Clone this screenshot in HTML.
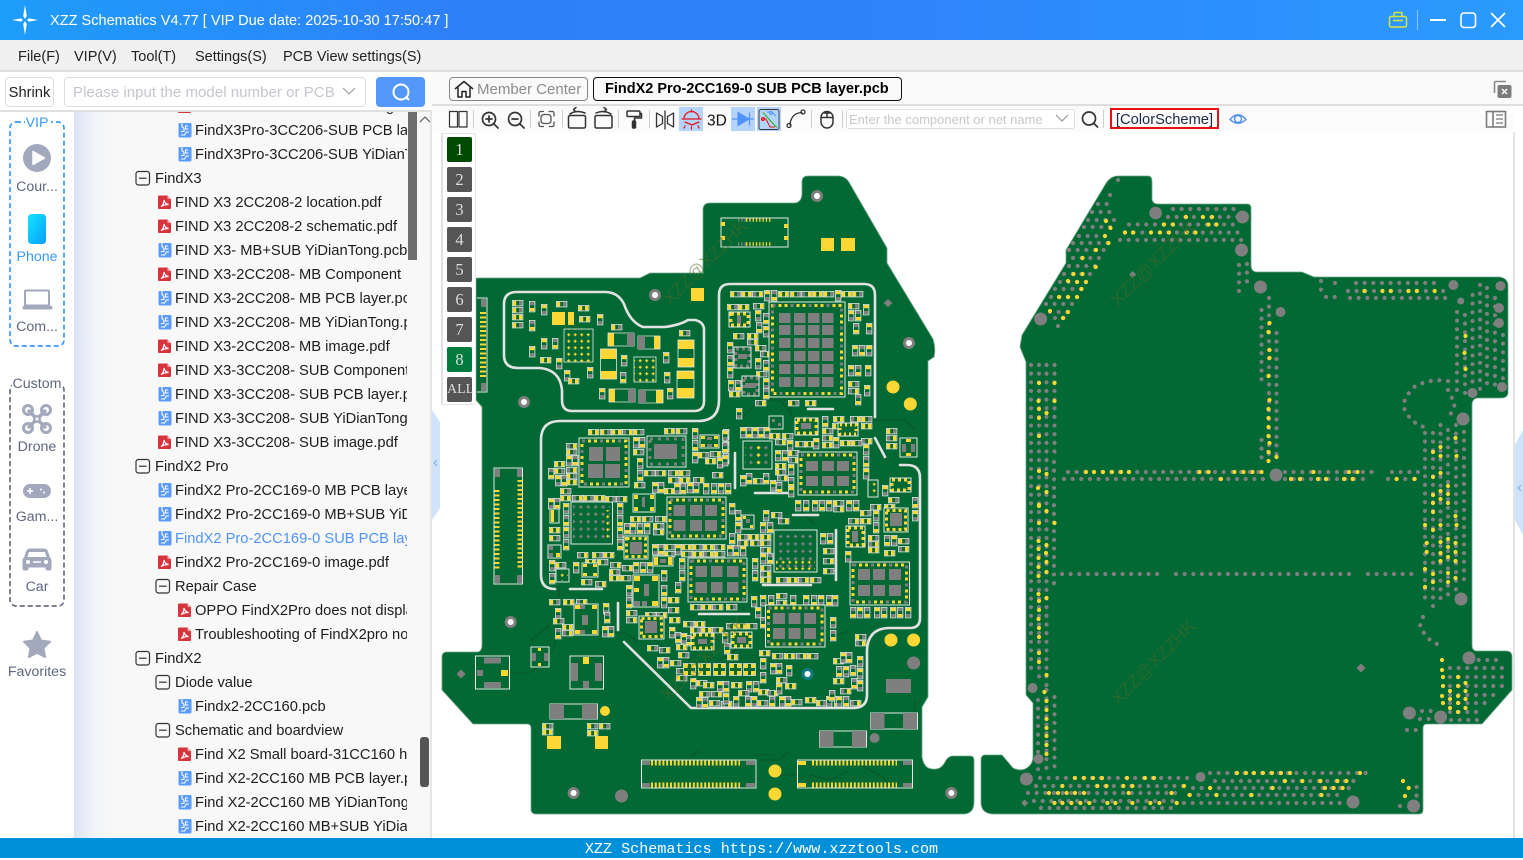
<!DOCTYPE html>
<html><head><meta charset="utf-8"><title>XZZ Schematics</title>
<style>
*{box-sizing:border-box}
html,body{margin:0;padding:0;width:1523px;height:858px;overflow:hidden;background:#fff;font-family:"Liberation Sans","Noto Sans CJK SC",sans-serif;color:#222}
.a{position:absolute}
#title{left:0;top:0;width:1523px;height:40px;background:linear-gradient(90deg,#1e9dfb 0,#2e80f8 30%,#2e82f9 55%,#2b9bff 100%)}
#ttext{left:50px;top:12px;font-size:14.55px;color:#fff;white-space:nowrap;line-height:18px}
#menu{left:0;top:40px;width:1523px;height:32px;background:#f0f0f0;border-bottom:2px solid #dedede}
#menu span{position:absolute;top:8px;font-size:14.5px;line-height:18px;white-space:nowrap}
#lefthead{left:0;top:72px;width:432px;height:40px;background:#fff;border-bottom:2px solid #e0e0e0}
#shrink{left:5px;top:5px;width:49px;height:30px;border:1px solid #ddd;border-radius:4px;font-size:14.7px;line-height:30px;text-align:center}
#inp{left:64px;top:5px;width:302px;height:30px;border:1px solid #ddd;border-radius:4px;font-size:15.1px;line-height:30px;color:#c4c6cc;padding-left:8px;white-space:nowrap}
#sb{left:376px;top:5px;width:49px;height:30px;background:#5598fb;border-radius:4px}
#side{left:0;top:112px;width:74px;height:726px;background:#fff}
.sl{position:absolute;left:0;width:74px;text-align:center;font-size:14.2px;color:#5f6780;line-height:20px;white-space:nowrap}
#panel{left:74px;top:112px;width:356px;height:726px;background:linear-gradient(90deg,#dbe4f4 0,#f3f5f9 22px,#f8f8f8 40px)}
#tree{left:0;top:0;width:333px;height:726px;overflow:hidden}
#rows{position:absolute;left:0;top:-17px;width:333px}
.r{height:24px;line-height:24px;font-size:14.7px;white-space:nowrap;position:relative;color:#1d1d1d}
.r svg{position:absolute;top:3px;left:0;width:16px;height:16px}
.r b{font-weight:normal;position:absolute;left:18px;top:0}
.d1{margin-left:61px}.d1 b{left:20px}
.d2{margin-left:83px}
.d3{margin-left:103px}
.fo{margin-left:81px}.fo b{left:20px}
#sc1{left:334px;top:0;width:9px;height:148px;background:#6e6e6e}
#sc2{left:346px;top:625px;width:9px;height:50px;background:#555;border-radius:3px}
#tabs{left:432px;top:72px;width:1091px;height:34px;background:#fafafa;border-bottom:2px solid #dedede}
#mc{left:17px;top:5px;width:139px;height:24px;border:1px solid #888;border-radius:4px;font-size:15px;color:#8c8c8c;line-height:23px;padding-left:27px;white-space:nowrap}
#tab{left:161px;top:5px;width:309px;height:24px;border:1px solid #111;border-radius:4px;font-size:14.5px;font-weight:bold;color:#000;line-height:23px;padding-left:11px;white-space:nowrap}
#tool{left:432px;top:106px;width:1081px;height:26px;background:#fbfbfb}
#ti{left:846px;top:109px;width:229px;height:20px;border:1px solid #ddd;border-radius:3px;background:#fff;font-size:13px;color:#c8c8c8;line-height:19px;padding-left:2px;white-space:nowrap;overflow:hidden}
#cs{left:1110px;top:108px;width:109px;height:21px;border:2px solid #e81010;font-size:14.7px;line-height:20px;text-align:center;color:#1c2b4a;white-space:nowrap}
#lp{left:441px;top:133px;width:35px;height:272px;background:#fff;border:1px solid #e4e4e4;border-left:2px solid #e0e0e0;border-radius:0 0 3px 0}
.lb{position:absolute;left:4px;width:25px;height:25px;background:#555;color:#ddd;font-family:"Liberation Serif",serif;font-size:16.5px;line-height:26px;text-align:center;border-radius:2px}
#foot{left:0;top:838px;width:1523px;height:20px;background:#0090d9;color:#fff;font-family:"Liberation Mono",monospace;font-size:15.1px;line-height:22px;text-align:center;white-space:nowrap}
.ic{fill:#026934;stroke:#e6e6e6;stroke-width:1}
.pd{fill:none;stroke:#fdd835;stroke-width:3;stroke-dasharray:3 3}
.pg{fill:none;stroke:#7f7f7f;stroke-width:3;stroke-dasharray:3 15}
.gs{fill:#7f7f7f}
.w{fill:none;stroke:#e2e2e2;stroke-width:2.6;stroke-linecap:round;stroke-linejoin:round}
.tr{fill:none;stroke:#0d4f24;stroke-width:.8}
.via{fill:none;stroke:#7f7f7f;stroke-width:4.2;stroke-linecap:round;stroke-dasharray:0 8.65}
.wm{font-family:"Liberation Sans",sans-serif;font-size:18px;fill:#4c6a26;opacity:.5}
.t{fill:none;stroke:#333;stroke-width:1.6;stroke-linecap:round;stroke-linejoin:round}
</style></head>
<body>
<svg class="a" style="left:0;top:0" width="1523" height="858" viewBox="0 0 1523 858" xmlns="http://www.w3.org/2000/svg">
<defs>
<g id="h"><rect x=".4" y=".4" width="10.5" height="5.5" fill="#026934" stroke="#e6e6e6" stroke-width=".8"/><rect x="1" y="1" width="3.2" height="4.4" fill="#fdd835"/><rect x="7" y="1" width="3.2" height="4.4" fill="#7f7f7f"/></g>
<g id="a"><rect x=".4" y=".4" width="10.5" height="5.5" fill="#026934" stroke="#e6e6e6" stroke-width=".8"/><rect x="1" y="1" width="3.2" height="4.4" fill="#7f7f7f"/><rect x="7" y="1" width="3.2" height="4.4" fill="#fdd835"/></g>
<g id="k"><rect x=".4" y=".4" width="10.5" height="5.500" fill="#026934" stroke="#e6e6e6" stroke-width=".8"/><rect x="1" y="1" width="3.2" height="4.4" fill="#fdd835"/><rect x="7" y="1" width="3.2" height="4.4" fill="#fdd835"/></g>
<g id="v"><rect x=".4" y=".4" width="5.5" height="10.5" fill="#026934" stroke="#e6e6e6" stroke-width=".8"/><rect x="1" y="1" width="4.4" height="3.2" fill="#fdd835"/><rect x="1" y="7" width="4.4" height="3.2" fill="#7f7f7f"/></g>
<g id="u"><rect x=".4" y=".4" width="5.5" height="10.5" fill="#026934" stroke="#e6e6e6" stroke-width=".8"/><rect x="1" y="1" width="4.4" height="3.2" fill="#7f7f7f"/><rect x="1" y="7" width="4.4" height="3.2" fill="#fdd835"/></g>
<g id="q"><rect x=".5" y=".5" width="12" height="12" fill="#026934" stroke="#e6e6e6" stroke-width=".8"/><path fill="#fdd835" d="M1 1h4v4h-4zM8 1h4v4h-4zM1 8h4v4h-4zM8 8h4v4h-4z"/></g>
<pattern id="bg" width="7.4" height="7.4" patternUnits="userSpaceOnUse"><path d="M3.7 2v3.4M2 3.7h3.4" stroke="#7f7f7f" stroke-width="1.4"/></pattern>
<pattern id="by" width="14.8" height="7.4" patternUnits="userSpaceOnUse"><path d="M3.7 2v3.4M2 3.7h3.4" stroke="#fdd835" stroke-width="1.4"/></pattern>
<pattern id="bc" width="6.5" height="6.5" patternUnits="userSpaceOnUse"><path d="M3.2 1.7v3M1.7 3.2h3" stroke="#fdd835" stroke-width="1.2"/></pattern>
<symbol id="pdf" viewBox="0 0 16 16"><path d="M2 1.500h8.500l3.500 3.500v9a1 1 0 0 1-1 1H2a1 1 0 0 1-1-1V2.500a1 1 0 0 1 1-1z" fill="#d8343c"/><path d="M10.500 1.500v3.500h3.500z" fill="#f1a4a8"/><path d="M4 12.500c2-1 3-4 3-6.500 .5 2.500 2 4 4.500 4.500-2.500 0-5 .5-7.500 2z" fill="none" stroke="#fff" stroke-width="1.200"/></symbol>
<symbol id="pcb" viewBox="0 0 16 16"><rect x="1.500" y="1" width="13" height="14.500" rx="1.500" fill="#5a9bfb"/><path d="M5 1v3.500l2 2v3l-3 0M11 4h-2.500v3l3 0M4 13h3.500l2-3h2.500" fill="none" stroke="#fff" stroke-width="1.100"/></symbol>
<symbol id="fld" viewBox="0 0 16 16"><rect x="1" y="1.500" width="13.500" height="13.500" rx="2.500" fill="none" stroke="#333" stroke-width="1.200"/><path d="M4 8.200h7.500" stroke="#333" stroke-width="1.200"/></symbol>
<linearGradient id="ph" x1="0" y1="0" x2="1" y2="1"><stop offset="0" stop-color="#12e6ff"/><stop offset="1" stop-color="#0a9cff"/></linearGradient>
</defs>

<!-- left board -->
<path d="M476 278H640L650 273H703V210Q703 203 710 203H795Q802 202 802 193V182Q802 176 808 176H838Q846 176 850 184L887 248V263L933 339Q936 349 934 357L928 361V697L922 707V757Q924 769 933 769Q941 770 945 762Q948 756 953 756H970Q974 756 974 760V802Q974 814 963 814H536Q531 814 531 809V728Q531 724 527 724H473L442 690V657Q442 652 447 652H478Q482 651 482 645V407L476 400Z" fill="#026934" stroke="#6fa68a" stroke-width=".8"/>
<!-- right board -->
<path d="M1118 176H1148Q1152 176 1152 182V198Q1152 204 1158 204H1247Q1251 204 1251 208V265Q1251 272 1257 272H1302L1314 277H1499Q1508 278 1508 286V392Q1508 398 1501 398H1477Q1472 399 1472 405V645Q1472 651 1477 651H1506Q1512 651 1512 657V690L1482 724H1427Q1423 724 1423 728V810Q1423 814 1419 814H994Q981 814 981 802V760Q981 755 985 755H1002L1013 768Q1019 771 1025 769Q1033 765 1033 757V703L1026 695V362L1020 347L1022 335L1066 263V250L1105 185Q1110 176 1118 176Z" fill="#026934" stroke="#6fa68a" stroke-width=".8"/>

<!-- right board vias -->
<path class="via" d="M1173 209H1235M1168 217H1240M1129 224.500H1236M1125 232.500H1245M1120 240H1245M1239 265V291M1247 264V288M1118 180H1119M1110 195H1111M1098 204H1111M1092 212H1111M1088 220H1116M1084 227H1113M1079 236H1111M1073 243H1109M1069 250H1106M1073 258H1101M1069 266H1096M1064 274H1091M1060 282H1087M1055 289H1082M1051 297H1078M1046 304H1073M1050 312H1069M1055 318H1066M1058 326H1059M1031 365V675M1039 365V680M1046.500 365V690M1054.500 365V453M1054 462V584M1054.500 697V767M1038 700V770M1046.500 690V770M1261.500 310V382M1261.500 440V460M1269 298V462M1276.500 333V462M1068 472H1261M1285 472H1376M1392 472H1418M1064 479H1266M1285 479H1371M1388 479H1415M1062 574H1158M1176 574H1351M1368 574H1413M1356 283H1439M1348 291H1445M1350 298H1448M1321 281V290M1326 297H1335M1335 283H1336M1457 312V392M1465 315V395M1472.500 295V392M1480 285V395M1487 288V390M1495 298V392M1503 335V380M1425 433V605M1433 433V607M1440.500 425V600M1448 430V595M1456 425V590M1464 432V585M1448 381Q1430 378 1414 387Q1400 402 1405 410Q1412 425 1428 428M1448 390L1455 404L1448 420M1423 617L1420 626L1424 633L1430 640L1437 644M1470 660H1504M1450 668H1505M1450 677H1505M1450 686H1505M1450 695H1498M1450 703H1490M1450 712H1482M1451 720H1480M1422 711H1431M1420 719H1430M1407 730H1417M1040 778H1190M1210 773H1370M1036 786H1190M1215 781H1358M1193 788H1352M1028 793H1181M1190 795H1338M1034 801H1177M1184 803H1344M1041 808H1172M1416.500 787V796M1400 806H1401"/>
<path fill="none" stroke="#fdd835" stroke-width="4.200" stroke-linecap="round" d="M1186 217h.01M1203 217h.01M1212 217h.01M1164 224.500h.01M1173 224.500h.01M1208.500 224.500h.01M1216.500 224.500h.01M1125 232.500h.01M1133 232.500h.01M1151 232.500h.01M1160 232.500h.01M1169 232.500h.01M1187 232.500h.01M1195.500 232.500h.01M1106 221h.01M1110.500 228h.01M1105 236h.01M1108.500 243h.01M1096 250h.01M1082.500 258h.01M1095.700 267h.01M1073.500 274h.01M1082.500 274h.01M1068 281h.01M1077 282h.01M1086 282h.01M1081.500 289h.01M1059 297h.01M1068 297h.01M1077 297h.01M1050 311h.01M1068 312h.01M1063 318h.01M1039 383h.01M1054.500 383h.01M1038.500 401h.01M1054.500 401h.01M1039 409h.01M1046.500 413h.01M1039 418h.01M1039 436h.01M1039 471h.01M1046.500 474h.01M1038 488h.01M1046.500 492h.01M1039 505h.01M1269.500 323h.01M1268.500 332h.01M1269.500 350h.01M1269.500 358h.01M1268.500 376h.01M1269.500 400h.01M1268.500 409h.01M1268.500 418h.01M1268.500 427h.01M1268.500 436h.01M1269.500 443h.01M1268.500 452h.01M1276.500 457h.01M1268.500 461h.01M1086 472h.01M1094 472h.01M1103 472h.01M1112 472h.01M1121 472h.01M1129 472h.01M1199.500 472h.01M1208.600 472h.01M1234.500 472h.01M1243.500 472h.01M1252.500 472h.01M1261.500 472h.01M1313.500 472h.01M1349 472h.01M1357.500 472h.01M1221 479h.01M1291 479h.01M1300 479h.01M1318 479h.01M1326 479h.01M1344 479h.01M1352.600 479h.01M1396.600 479h.01M1414.600 479h.01M1364.400 291h.01M1382.400 291h.01M1390.700 291h.01M1408.400 291h.01M1416.800 291h.01M1434.700 291h.01M1465.500 336h.01M1464.500 353h.01M1465.500 369h.01M1455.500 438h.01M1440.500 447h.01M1433 452h.01M1440.500 456h.01M1456.500 456h.01M1440.500 473h.01M1433 477h.01M1448 486h.01M1440.500 491h.01M1433 495h.01M1448 494h.01M1440.500 499h.01M1433 503h.01M1448 503h.01M1433 512h.01M1455.500 516h.01M1425 525h.01M1440.500 525h.01M1456.500 525h.01M1433 530h.01M1448 539h.01M1426.700 543h.01M1440.500 542h.01M1455.500 543h.01M1448 547h.01M1426.700 552h.01M1440.500 553h.01M1455.500 552h.01M1448 557h.01M1440.500 561h.01M1455.500 561h.01M1425 569h.01M1448 573h.01M1433 574h.01M1455.500 578h.01M1433 582h.01M1448 582h.01M1425 587h.01M1039 506h.01M1046.500 511h.01M1039 523h.01M1054.500 523h.01M1038.500 541h.01M1046.500 545h.01M1038.500 549h.01M1046 553h.01M1038.500 558h.01M1046.500 562h.01M1038.500 567h.01M1046.500 572h.01M1038.500 576h.01M1038.500 594h.01M1039 601h.01M1046.500 598h.01M1039 610h.01M1038.500 619h.01M1039 628h.01M1039 637h.01M1039 653h.01M1039 662h.01M1046.500 675h.01M1044.400 692h.01M1046.500 701h.01M1046.500 710h.01M1046.500 719h.01M1046.500 728h.01M1046.500 736h.01M1046.500 745h.01M1046.500 754h.01M1442 660h.01M1442 670h.01M1443 677h.01M1458 677h.01M1465.500 683h.01M1443 686h.01M1458 686h.01M1450 691h.01M1465.500 691h.01M1442 696h.01M1458 696h.01M1450 699h.01M1465.500 699h.01M1443 703h.01M1458 703h.01M1450 708h.01M1465.500 708h.01M1458 712h.01M1075 778h.01M1084 778h.01M1093 778h.01M1102 778h.01M1127 778h.01M1145 778h.01M1154 778h.01M1237 773h.01M1246 773h.01M1254 773h.01M1263 773h.01M1272 773h.01M1281 773h.01M1290 773h.01M1360 773h.01M1062.400 786h.01M1097.400 786h.01M1106.400 786h.01M1123.400 786h.01M1132.400 786h.01M1184 786h.01M1285 781h.01M1302.400 781h.01M1320.400 781h.01M1337.400 781h.01M1346.400 781h.01M1210 788h.01M1272.600 788h.01M1325 788h.01M1333.600 788h.01M1342.600 788h.01M1049 793h.01M1058 793h.01M1066.600 793h.01M1075 793h.01M1084 793h.01M1128.600 793h.01M1171.500 793h.01M1189.500 795h.01M1216.500 795h.01M1251.500 795h.01M1321.500 795h.01M1054.500 803h.01M1062.400 803h.01M1071.400 803h.01M1080.400 803h.01M1089.400 803h.01M1107.400 803h.01M1115.400 803h.01M1132.400 803h.01M1150.400 803h.01M1159.400 803h.01M1176.700 803h.01M1403 781h.01M1408.700 788h.01M1405 796h.01"/>
<g fill="#7f7f7f"><circle cx="1155.600" cy="213" r="6.300"/><circle cx="1242.500" cy="217" r="6.500"/><circle cx="1241.500" cy="250" r="6.500"/><circle cx="1260.500" cy="287" r="6.500"/><circle cx="1280.500" cy="312" r="5"/><circle cx="1040.600" cy="319" r="6.500"/><circle cx="1453.400" cy="285" r="5"/><circle cx="1500.500" cy="286" r="5"/><circle cx="1460.700" cy="301" r="3.500"/><circle cx="1499" cy="308" r="5"/><circle cx="1499" cy="323" r="5"/><circle cx="1502" cy="387" r="5"/><circle cx="1472.500" cy="393" r="5"/><circle cx="1463" cy="419" r="6.500"/><circle cx="1276" cy="475" r="6.500"/><circle cx="1461" cy="599" r="6.500"/><circle cx="1469" cy="658" r="6.500"/><circle cx="1409.400" cy="713" r="6.500"/><circle cx="1440.600" cy="717" r="6.500"/><circle cx="1032.600" cy="688" r="5"/><circle cx="1038.500" cy="759" r="5"/><circle cx="1026.400" cy="779" r="6.500"/><circle cx="1200.600" cy="777" r="5"/><circle cx="1353" cy="802" r="6.500"/><circle cx="1413.600" cy="806" r="6.500"/><path d="M1361 663.500l4.500 4.500-4.500 4.500-4.500-4.500zM1024.700 799.500l3.500 3.500-3.500 3.500-3.500-3.500zM1132.600 271l3.500 3.500-3.500 3.500-3.500-3.500zM888 299l4.500 4-4.500 4-4.500-4zM461 669.500l4.500 4.500-4.500 4.500-4.500-4.500z"/></g>

<!-- traces -->
<path class="tr" d="M509 673H527Q547 668 556 640M531 640L550 625M556 640V625M600 633H625L638 642M630 620V590M559 586V610M670 655L650 635M800 425L780 400H760L740 420M870 420H905L915 430M855 385V405M915 700V720M754 755H770M690 757L700 750M760 760H780L790 750M780 775H797M510 520H530M508 560H525M720 660L750 640M827 640L850 630M810 775L830 780L850 770M860 765L880 775L890 785M800 510L815 525M725 510L745 530M660 530L680 550M880 500H895V520M770 400H790V415M745 440V425M640 540V560M616 480V500"/>

<!-- white shields -->
<path class="w" d="M517 292H605Q618 292 624 304Q630 322 643 327H665Q680 325 688 320H695Q704 322 704 330V401Q704 411 694 411H572Q562 411 562 400V390Q560 370 540 368H518Q504 368 504 355V304Q504 292 517 292Z"/>
<path class="w" d="M875 417V295Q875 284 864 284H730Q719 284 719 295V400Q719 421 698 421H560Q541 421 541 440V575Q541 589 555 589"/>
<path class="w" d="M624 642L691 708H853Q867 708 867 695V650Q868 628 890 628H910Q920 628 920 618V478Q920 465 907 465H900"/>
<path class="w" d="M875 438L885 457M808 409H833M735 453V488M755 493H790M570 589H602M618 603V630M836 530V580M763 585H811M699 614H749M793 515H818"/>

<!-- small components, lower zone -->
<g>
<use href="#k" x="588" y="429"/><use href="#h" x="600" y="429"/><use href="#k" x="611" y="429"/><use href="#a" x="622" y="429"/><use href="#h" x="633" y="429"/><use href="#k" x="664" y="428"/><use href="#h" x="676" y="428"/><use href="#v" x="633" y="437"/><use href="#u" x="639" y="437"/><use href="#h" x="633" y="449"/><use href="#v" x="692" y="428"/><use href="#u" x="692" y="440"/><use href="#v" x="692" y="452"/><use href="#u" x="723" y="429"/><use href="#v" x="723" y="441"/><use href="#u" x="723" y="453"/><use href="#h" x="698" y="452"/><use href="#a" x="710" y="451"/><use href="#k" x="705" y="458"/><use href="#v" x="717" y="457"/><use href="#v" x="637" y="458"/><use href="#u" x="637" y="470"/><use href="#h" x="634" y="482"/><use href="#h" x="644" y="470"/><use href="#a" x="655" y="470"/><use href="#a" x="668" y="470"/><use href="#h" x="679" y="470"/><use href="#h" x="668" y="477"/><use href="#k" x="679" y="477"/><use href="#a" x="693" y="477"/><use href="#a" x="712" y="472"/>
<use href="#v" x="652" y="482"/><use href="#u" x="658" y="482"/><use href="#k" x="664" y="488"/><use href="#v" x="674" y="483"/><use href="#u" x="680" y="483"/><use href="#v" x="687" y="482"/><use href="#u" x="693" y="482"/><use href="#v" x="703" y="483"/><use href="#u" x="711" y="483"/><use href="#v" x="718" y="483"/><use href="#u" x="725" y="483"/>
<use href="#a" x="566" y="443"/><use href="#h" x="566" y="449"/><use href="#v" x="566" y="455"/><use href="#u" x="572" y="455"/><use href="#k" x="554" y="461"/><use href="#h" x="554" y="468"/><use href="#u" x="548" y="468"/><use href="#a" x="566" y="467"/><use href="#h" x="566" y="473"/><use href="#v" x="555" y="475"/><use href="#u" x="561" y="475"/><use href="#k" x="566" y="479"/><use href="#h" x="560" y="488"/><use href="#k" x="560" y="495"/><use href="#a" x="572" y="495"/><use href="#h" x="583" y="495"/><use href="#k" x="594" y="495"/><use href="#h" x="605" y="496"/><use href="#a" x="616" y="496"/><use href="#v" x="548" y="498"/><use href="#u" x="554" y="498"/><use href="#v" x="617" y="503"/><use href="#u" x="617" y="515"/>
<use href="#v" x="563" y="503"/><use href="#u" x="563" y="515"/><use href="#v" x="563" y="527"/><use href="#u" x="563" y="539"/><use href="#k" x="630" y="516"/><use href="#h" x="642" y="516"/><use href="#a" x="655" y="516"/><use href="#v" x="617" y="527"/><use href="#u" x="624" y="523"/><use href="#u" x="617" y="539"/><use href="#v" x="630" y="523"/><use href="#u" x="637" y="523"/><use href="#v" x="644" y="523"/><use href="#h" x="653" y="523"/><use href="#a" x="653" y="529"/><use href="#k" x="549" y="527"/><use href="#h" x="549" y="535"/>
<use href="#h" x="592" y="552"/><use href="#k" x="603" y="552"/><use href="#a" x="577" y="552"/><use href="#k" x="585" y="559"/><use href="#h" x="597" y="559"/><use href="#v" x="549" y="560"/><use href="#h" x="555" y="562"/><use href="#v" x="573" y="562"/><use href="#u" x="549" y="573"/><use href="#h" x="581" y="579"/><use href="#a" x="595" y="581"/><use href="#a" x="610" y="562"/><use href="#h" x="609" y="569"/><use href="#k" x="609" y="575"/><use href="#h" x="620" y="575"/><use href="#a" x="622" y="565"/><use href="#v" x="633" y="562"/><use href="#u" x="640" y="562"/><use href="#v" x="647" y="562"/>
<use href="#v" x="652" y="544"/><use href="#u" x="658" y="544"/><use href="#h" x="664" y="544"/><use href="#v" x="675" y="544"/><use href="#k" x="681" y="544"/><use href="#h" x="692" y="544"/><use href="#k" x="703" y="544"/><use href="#a" x="714" y="544"/><use href="#v" x="727" y="545"/><use href="#u" x="733" y="545"/><use href="#v" x="740" y="545"/><use href="#h" x="664" y="551"/><use href="#h" x="681" y="551"/><use href="#k" x="692" y="551"/><use href="#a" x="703" y="551"/><use href="#h" x="714" y="551"/><use href="#v" x="679" y="558"/><use href="#u" x="679" y="570"/><use href="#v" x="661" y="570"/><use href="#u" x="661" y="585"/><use href="#v" x="661" y="597"/><use href="#u" x="675" y="582"/><use href="#k" x="668" y="597"/><use href="#a" x="668" y="607"/><use href="#v" x="626" y="585"/><use href="#u" x="626" y="597"/><use href="#h" x="645" y="612"/><use href="#a" x="656" y="612"/><use href="#v" x="603" y="603"/>
<use href="#h" x="549" y="599"/><use href="#k" x="563" y="599"/><use href="#a" x="576" y="599"/><use href="#v" x="555" y="608"/><use href="#h" x="553" y="618"/><use href="#k" x="562" y="624"/><use href="#a" x="562" y="630"/><use href="#u" x="555" y="628"/><use href="#u" x="604" y="612"/><use href="#v" x="602" y="626"/><use href="#u" x="608" y="626"/><use href="#h" x="626" y="610"/><use href="#a" x="626" y="617"/><use href="#k" x="669" y="617"/>
<!-- right of centre -->
<use href="#v" x="729" y="503"/><use href="#u" x="735" y="510"/><use href="#v" x="735" y="522"/><use href="#u" x="729" y="533"/><use href="#h" x="737" y="534"/><use href="#k" x="748" y="534"/><use href="#a" x="737" y="540"/><use href="#h" x="750" y="540"/><use href="#v" x="760" y="522"/><use href="#u" x="767" y="522"/><use href="#k" x="760" y="534"/><use href="#h" x="760" y="540"/><use href="#a" x="760" y="547"/><use href="#v" x="760" y="553"/><use href="#u" x="767" y="553"/><use href="#v" x="752" y="558"/><use href="#u" x="752" y="570"/><use href="#h" x="760" y="565"/><use href="#a" x="760" y="571"/><use href="#k" x="760" y="577"/><use href="#v" x="751" y="596"/><use href="#h" x="776" y="577"/><use href="#k" x="787" y="577"/><use href="#a" x="798" y="577"/><use href="#h" x="810" y="577"/>
<use href="#v" x="760" y="595"/><use href="#u" x="768" y="595"/><use href="#h" x="776" y="593"/><use href="#a" x="776" y="600"/><use href="#u" x="790" y="595"/><use href="#v" x="803" y="595"/><use href="#u" x="811" y="595"/><use href="#v" x="818" y="595"/><use href="#u" x="826" y="595"/><use href="#v" x="832" y="595"/>
<use href="#v" x="820" y="533"/><use href="#u" x="827" y="533"/><use href="#h" x="823" y="548"/><use href="#a" x="823" y="558"/><use href="#h" x="823" y="568"/><use href="#v" x="763" y="510"/><use href="#h" x="771" y="512"/><use href="#a" x="778" y="518"/>
<use href="#v" x="795" y="500"/><use href="#u" x="803" y="500"/><use href="#v" x="812" y="500"/><use href="#u" x="819" y="500"/><use href="#v" x="826" y="500"/><use href="#h" x="833" y="500"/><use href="#a" x="833" y="506"/><use href="#v" x="846" y="500"/><use href="#u" x="853" y="500"/><use href="#h" x="860" y="510"/><use href="#a" x="848" y="518"/><use href="#k" x="860" y="518"/><use href="#v" x="873" y="510"/><use href="#u" x="873" y="522"/><use href="#h" x="868" y="535"/><use href="#a" x="868" y="541"/><use href="#k" x="868" y="547"/><use href="#v" x="845" y="551"/>
<use href="#u" x="884" y="535"/><use href="#v" x="891" y="535"/><use href="#h" x="898" y="538"/><use href="#a" x="898" y="546"/><use href="#k" x="884" y="550"/>
<use href="#u" x="850" y="607"/><use href="#v" x="857" y="607"/><use href="#u" x="864" y="607"/><use href="#v" x="874" y="607"/><use href="#u" x="881" y="607"/><use href="#v" x="890" y="607"/><use href="#u" x="897" y="607"/><use href="#v" x="905" y="607"/>
<use href="#v" x="740" y="427"/><use href="#u" x="746" y="427"/><use href="#v" x="752" y="427"/><use href="#u" x="758" y="427"/><use href="#v" x="764" y="427"/><use href="#k" x="769" y="433"/><use href="#h" x="782" y="433"/><use href="#a" x="775" y="439"/><use href="#v" x="787" y="440"/><use href="#h" x="795" y="441"/><use href="#k" x="804" y="441"/><use href="#v" x="813" y="438"/>
<use href="#h" x="822" y="428"/><use href="#a" x="822" y="435"/><use href="#k" x="822" y="442"/><use href="#v" x="833" y="437"/><use href="#u" x="822" y="416"/><use href="#h" x="832" y="423"/><use href="#k" x="833" y="416"/><use href="#a" x="850" y="416"/><use href="#h" x="861" y="416"/><use href="#k" x="861" y="423"/><use href="#a" x="861" y="438"/><use href="#k" x="840" y="440"/><use href="#h" x="851" y="440"/><use href="#v" x="863" y="444"/><use href="#u" x="863" y="456"/><use href="#v" x="863" y="468"/>
<use href="#v" x="775" y="450"/><use href="#u" x="782" y="450"/><use href="#h" x="788" y="450"/><use href="#a" x="788" y="457"/><use href="#k" x="775" y="463"/><use href="#h" x="775" y="469"/><use href="#v" x="788" y="464"/><use href="#a" x="777" y="475"/><use href="#u" x="788" y="477"/><use href="#v" x="788" y="486"/><use href="#v" x="740" y="475"/><use href="#u" x="746" y="473"/><use href="#h" x="753" y="478"/><use href="#u" x="763" y="473"/><use href="#v" x="770" y="480"/><use href="#u" x="776" y="482"/><use href="#v" x="722" y="430"/><use href="#u" x="722" y="442"/><use href="#v" x="722" y="455"/>
<use href="#h" x="886" y="428"/><use href="#a" x="886" y="435"/><use href="#k" x="886" y="443"/><use href="#v" x="882" y="485"/><use href="#h" x="888" y="497"/><use href="#a" x="870" y="504"/><use href="#k" x="884" y="504"/><use href="#u" x="912" y="497"/><use href="#v" x="912" y="510"/>
<!-- below -->
<use href="#h" x="690" y="627"/><use href="#k" x="701" y="627"/><use href="#a" x="712" y="627"/><use href="#h" x="683" y="621"/><use href="#k" x="694" y="621"/><use href="#v" x="669" y="627"/><use href="#u" x="675" y="632"/><use href="#v" x="681" y="633"/><use href="#u" x="686" y="635"/><use href="#h" x="647" y="645"/><use href="#a" x="659" y="647"/><use href="#k" x="676" y="644"/><use href="#h" x="678" y="652"/><use href="#v" x="657" y="657"/><use href="#u" x="663" y="657"/><use href="#h" x="670" y="660"/><use href="#a" x="676" y="668"/><use href="#h" x="676" y="675"/>
<use href="#q" x="683" y="663"/><use href="#q" x="698" y="663"/><use href="#q" x="713" y="663"/><use href="#q" x="729" y="663"/><use href="#q" x="743" y="663"/>
<use href="#v" x="690" y="678"/><use href="#h" x="696" y="680"/><use href="#k" x="703" y="682"/><use href="#v" x="717" y="681"/><use href="#u" x="723" y="681"/><use href="#k" x="731" y="682"/><use href="#v" x="746" y="681"/><use href="#u" x="753" y="681"/>
<use href="#v" x="696" y="697"/><use href="#u" x="702" y="697"/><use href="#h" x="709" y="700"/><use href="#a" x="721" y="701"/><use href="#v" x="733" y="696"/><use href="#u" x="745" y="696"/><use href="#v" x="751" y="696"/><use href="#h" x="757" y="700"/><use href="#u" x="769" y="696"/><use href="#v" x="779" y="696"/><use href="#u" x="785" y="696"/><use href="#h" x="791" y="699"/><use href="#k" x="805" y="697"/><use href="#h" x="816" y="700"/><use href="#v" x="826" y="696"/><use href="#u" x="834" y="696"/><use href="#a" x="850" y="700"/>
<use href="#h" x="699" y="691"/><use href="#a" x="711" y="691"/><use href="#v" x="723" y="693"/><use href="#h" x="738" y="690"/><use href="#k" x="758" y="689"/><use href="#a" x="767" y="690"/><use href="#v" x="776" y="683"/><use href="#h" x="776" y="677"/><use href="#k" x="785" y="683"/>
<use href="#v" x="760" y="658"/><use href="#u" x="760" y="672"/><use href="#v" x="770" y="663"/><use href="#u" x="776" y="663"/><use href="#v" x="786" y="665"/><use href="#k" x="759" y="650"/><use href="#h" x="772" y="653"/><use href="#k" x="784" y="653"/><use href="#a" x="796" y="653"/><use href="#h" x="807" y="653"/>
<use href="#h" x="833" y="658"/><use href="#v" x="840" y="652"/><use href="#u" x="846" y="652"/><use href="#v" x="857" y="656"/><use href="#u" x="836" y="666"/><use href="#v" x="843" y="666"/><use href="#u" x="850" y="665"/><use href="#v" x="857" y="668"/><use href="#u" x="851" y="678"/><use href="#k" x="833" y="678"/><use href="#a" x="840" y="688"/><use href="#v" x="857" y="680"/><use href="#u" x="829" y="690"/><use href="#v" x="836" y="696"/><use href="#u" x="843" y="696"/>
<use href="#v" x="830" y="617"/><use href="#u" x="830" y="630"/><use href="#a" x="855" y="640"/><use href="#h" x="855" y="634"/><use href="#a" x="726" y="623"/><use href="#k" x="736" y="623"/><use href="#h" x="746" y="623"/><use href="#v" x="722" y="632"/><use href="#u" x="724" y="643"/><use href="#k" x="727" y="654"/><use href="#v" x="755" y="607"/><use href="#u" x="760" y="617"/>
<use href="#h" x="690" y="604"/><use href="#k" x="701" y="604"/><use href="#a" x="712" y="604"/><use href="#h" x="726" y="604"/>
</g>

<!-- upper block small components -->
<g>
<use href="#h" x="730" y="291"/><use href="#k" x="741" y="291"/><use href="#a" x="752" y="291"/><use href="#v" x="764" y="290"/><use href="#u" x="771" y="290"/><use href="#k" x="778" y="291"/><use href="#h" x="790" y="291"/><use href="#a" x="801" y="291"/><use href="#k" x="812" y="291"/><use href="#h" x="823" y="291"/><use href="#v" x="835" y="290"/><use href="#k" x="841" y="291"/><use href="#h" x="852" y="291"/>
<use href="#h" x="727" y="304"/><use href="#k" x="738" y="304"/><use href="#a" x="753" y="303"/><use href="#v" x="727" y="342"/><use href="#u" x="727" y="355"/><use href="#v" x="727" y="367"/><use href="#h" x="733" y="333"/><use href="#k" x="747" y="333"/><use href="#a" x="747" y="339"/><use href="#v" x="755" y="310"/><use href="#u" x="763" y="313"/><use href="#v" x="763" y="326"/><use href="#u" x="756" y="322"/><use href="#h" x="755" y="345"/><use href="#a" x="760" y="351"/><use href="#v" x="755" y="358"/><use href="#u" x="763" y="360"/><use href="#h" x="756" y="371"/><use href="#v" x="763" y="378"/><use href="#u" x="763" y="388"/><use href="#v" x="728" y="380"/><use href="#u" x="735" y="380"/><use href="#k" x="729" y="391"/><use href="#a" x="755" y="400"/><use href="#h" x="788" y="400"/><use href="#k" x="805" y="400"/><use href="#v" x="736" y="408"/>
<use href="#h" x="848" y="303"/><use href="#v" x="848" y="310"/><use href="#u" x="855" y="310"/><use href="#v" x="863" y="304"/><use href="#u" x="853" y="323"/><use href="#v" x="866" y="323"/><use href="#v" x="852" y="345"/><use href="#u" x="859" y="345"/><use href="#v" x="866" y="345"/><use href="#v" x="848" y="365"/><use href="#u" x="855" y="365"/><use href="#v" x="865" y="365"/><use href="#h" x="848" y="381"/><use href="#a" x="848" y="388"/><use href="#u" x="855" y="394"/><use href="#v" x="864" y="385"/>
</g>

<!-- large ICs -->
<g>
<rect class="ic" x="769" y="302" width="76" height="95"/><rect class="pd" x="772.500" y="305.500" width="69" height="88"/><rect class="pg" x="772.500" y="305.500" width="69" height="88"/>
<path class="gs" d="M779 313h11.500v10h-11.500zM794 313h11.500v10h-11.500zM808 313h11.500v10h-11.500zM822 313h11.500v10h-11.500zM779 325h11.500v10h-11.500zM794 325h11.500v10h-11.500zM808 325h11.500v10h-11.500zM822 325h11.500v10h-11.500zM779 338h11.500v10h-11.500zM794 338h11.500v10h-11.500zM808 338h11.500v10h-11.500zM822 338h11.500v10h-11.500zM779 351h11.500v10h-11.500zM794 351h11.500v10h-11.500zM808 351h11.500v10h-11.500zM822 351h11.500v10h-11.500zM779 364h11.500v10h-11.500zM794 364h11.500v10h-11.500zM808 364h11.500v10h-11.500zM822 364h11.500v10h-11.500zM779 377h11.500v10h-11.500zM794 377h11.500v10h-11.500zM808 377h11.500v10h-11.500zM822 377h11.500v10h-11.500z"/>
<rect class="ic" x="579" y="438" width="50" height="49"/><rect class="pd" x="582" y="441" width="44" height="43"/><rect class="pg" x="582" y="441" width="44" height="43"/>
<path class="gs" d="M589 447h14v14h-14zM606 447h14v14h-14zM588 464h15v14h-15zM605 464h15v14h-15z"/>
<rect class="ic" x="647" y="436" width="39" height="31"/><rect class="pg" x="650" y="439" width="33" height="25" style="stroke-dasharray:3 5"/>
<path class="gs" d="M654 444h23v15h-23z"/>
<rect class="ic" x="700" y="435" width="19" height="13"/><path fill="#fdd835" d="M701 436h4v3h-4zM714 436h4v3h-4zM701 444h4v3h-4zM714 444h4v3h-4z"/><path class="gs" d="M707 437h5v3h-5zM707 444h5v3h-5z"/>
<rect class="ic" x="798" y="452" width="59" height="43"/><rect class="pd" x="801" y="455" width="53" height="37"/><rect class="pg" x="801" y="455" width="53" height="37"/>
<path class="gs" d="M806 461h12v10h-12zM822 461h12v10h-12zM837 461h12v10h-12zM806 476h12v10h-12zM822 476h12v10h-12zM837 476h12v10h-12z"/>
<rect class="ic" x="667" y="497" width="59" height="42"/><rect class="pd" x="670" y="500" width="53" height="36"/><rect class="pg" x="670" y="500" width="53" height="36"/>
<path class="gs" d="M673.500 505h12v11h-12zM690 505h12v11h-12zM705 505h12v11h-12zM673.500 520h12v11h-12zM690 520h12v11h-12zM705 520h12v11h-12z"/>
<rect class="ic" x="571" y="502" width="41.500" height="42"/><rect x="573" y="504" width="37" height="38" fill="url(#bg)"/><rect x="603" y="510" width="7" height="30" fill="url(#bc)"/>
<rect class="ic" x="633" y="494" width="22" height="18"/><path class="gs" d="M642 497h3v10h-3z"/><path fill="#fdd835" d="M634 495h4v4h-4zM650 495h4v4h-4zM634 507h4v4h-4zM650 507h4v4h-4z"/>
<rect class="ic" x="624" y="536" width="24" height="23"/><rect class="pd" x="626.500" y="538.500" width="19" height="18" stroke-width="2"/><path class="gs" d="M630 542h12v12h-12z"/>
<rect class="ic" x="653" y="556" width="20" height="10"/><path fill="#fdd835" d="M654 557h4v8h-4zM668 557h4v8h-4z"/><path class="gs" d="M660 559h6v4h-6z"/>
<rect class="ic" x="688" y="558" width="59" height="44"/><rect class="pd" x="691" y="561" width="53" height="38"/><rect class="pg" x="691" y="561" width="53" height="38"/>
<path class="gs" d="M695.500 566h11.500v11h-11.500zM711 566h11.500v11h-11.500zM727 566h11.500v11h-11.500zM695.500 582h11.500v11h-11.500zM711 582h11.500v11h-11.500zM727 582h11.500v11h-11.500z"/>
<rect class="ic" x="774" y="530" width="43" height="42"/><rect x="776" y="532" width="39" height="38" fill="url(#bg)"/><rect x="776" y="560" width="39" height="10" fill="url(#bc)"/>
<rect class="ic" x="765.500" y="605" width="59.500" height="42"/><rect class="pd" x="768.500" y="608" width="53.500" height="36"/><rect class="pg" x="768.500" y="608" width="53.500" height="36"/>
<path class="gs" d="M773 613h12v11h-12zM788.500 613h12v11h-12zM804 613h12v11h-12zM773 628h12v11h-12zM788.500 628h12v11h-12zM804 628h12v11h-12z"/>
<rect class="ic" x="850" y="562" width="59.500" height="43"/><rect class="pd" x="853" y="565" width="53.500" height="37"/><rect class="pg" x="853" y="565" width="53.500" height="37"/>
<path class="gs" d="M858 569h12v11h-12zM873 569h12v11h-12zM889 569h12v11h-12zM858 585h12v11h-12zM873 585h12v11h-12zM889 585h12v11h-12z"/>
<rect class="ic" x="884" y="508" width="24" height="24"/><rect class="pd" x="886.500" y="510.500" width="19" height="19" stroke-width="2"/><path class="gs" d="M890 513h12v13h-12z"/>
<rect class="ic" x="846" y="526" width="19" height="21"/><rect class="pd" x="848" y="528" width="15" height="17" stroke-width="2"/><path class="gs" d="M852 531h6v11h-6z"/>
<rect class="ic" x="633" y="575" width="26" height="32"/><path class="gs" d="M644 584h5v12h-5zM634 601h6v5h-6zM642 601h5v5h-5z"/><path fill="#fdd835" d="M634 576h6v5h-6zM652 576h6v5h-6zM652 601h6v5h-6zM634 588h5v4h-5z"/>
<rect class="ic" x="574" y="604" width="24" height="31"/><path class="gs" d="M582 615h6v10h-6zM580 605h5v4h-5zM580 630h5v4h-5z"/><path fill="#fdd835" d="M575 605h5v4h-5zM592 605h5v4h-5zM575 630h5v4h-5zM592 630h5v4h-5z"/>
<rect class="ic" x="639" y="616" width="25" height="23"/><rect class="pd" x="641.500" y="618.500" width="20" height="18" stroke-width="2"/><path class="gs" d="M645 621h12v12h-12z"/>
<rect class="ic" x="582" y="563" width="16" height="14"/><path fill="#fdd835" d="M583 564h4v3h-4zM593 564h4v3h-4zM583 573h4v3h-4zM593 573h4v3h-4z"/>
<rect class="ic" x="556" y="569" width="13" height="13"/><rect x="557" y="570" width="11" height="11" fill="url(#bc)"/>
<rect class="ic" x="548" y="545" width="13" height="13"/><path class="gs" d="M549 546h4v4h-4zM549 553h4v4h-4z"/><path fill="#fdd835" d="M556 553h4v4h-4z"/>
<rect class="ic" x="550" y="509" width="9" height="14"/><path fill="#fdd835" d="M551 510h3v12h-3z"/>
<rect class="ic" x="742" y="515" width="12" height="14"/><path class="gs" d="M746 519h4v4h-4z"/><path fill="#fdd835" d="M743 516h3v3h-3zM750 525h3v3h-3z"/>
<rect class="ic" x="691" y="633" width="23" height="17"/><rect class="pd" x="693" y="635" width="19" height="13" stroke-width="2"/><path class="gs" d="M698 639h9v5h-9z"/>
<rect class="ic" x="731" y="632" width="21" height="16"/><rect class="pd" x="733" y="634" width="17" height="12" stroke-width="2"/><path class="gs" d="M737 637h9v6h-9z"/>
<rect class="ic" x="729" y="312" width="21" height="15"/><path class="gs" d="M737 316h4v10h-4z"/><rect class="pd" x="731" y="314" width="17" height="11" stroke-width="1.800"/>
<rect class="ic" x="734" y="347" width="17" height="21"/><path class="gs" d="M738 354h9v5h-9z"/><rect class="pg" x="736" y="349" width="13" height="17" stroke-width="1.800" style="stroke-dasharray:3 3"/>
<rect class="ic" x="742" y="376" width="17" height="20"/><path class="gs" d="M745 383h11v5h-11z"/><rect class="pg" x="744" y="378" width="13" height="16" stroke-width="1.800" style="stroke-dasharray:3 3"/>
<rect class="ic" x="769" y="416" width="14" height="13"/><path class="gs" d="M772 419h3v3h-3zM778 423h3v3h-3z"/>
<rect class="ic" x="795" y="418" width="23" height="17"/><rect class="pd" x="797" y="420" width="19" height="13" stroke-width="1.800"/><path class="gs" d="M801 423h10v6h-10z"/>
<rect class="ic" x="838" y="423" width="20" height="13"/><rect class="pd" x="840" y="425" width="16" height="9" stroke-width="1.500" style="stroke-dasharray:2 3"/>
<rect class="ic" x="900" y="438" width="17" height="19"/><path class="gs" d="M902 444h4v8h-4zM911 444h4v8h-4z"/><path fill="#fdd835" d="M906 439h5v3h-5zM906 453h5v3h-5z"/>
<rect class="ic" x="890" y="478" width="21" height="14"/><rect class="pd" x="892" y="480" width="17" height="10" stroke-width="1.500"/>
<rect class="ic" x="868" y="480" width="10" height="17"/><rect x="869" y="481" width="8" height="15" fill="url(#bc)"/>
<rect class="ic" x="743" y="441" width="29" height="28"/><rect x="745" y="443" width="25" height="24" fill="url(#bg)"/><rect x="745" y="443" width="25" height="24" fill="url(#by)"/>
<!-- connectors -->
<rect x="721" y="218" width="67" height="29" fill="none" stroke="#e6e6e6"/><path fill="#fdd835" d="M721 222h4v4h-4zM784 224h4v4h-4zM721 236h4v4h-4zM784 236h4v4h-4z"/><path fill="none" stroke="#fdd835" stroke-width="3.500" stroke-dasharray="1.300 2" d="M746 220H771M746 244H771"/><path fill="none" stroke="#7f7f7f" stroke-width="3.500" stroke-dasharray="1.300 2" d="M738 220H746M738 244H746"/>
<path fill="none" stroke="#e6e6e6" d="M477 298H487V392H477"/><path fill="none" stroke="#fdd835" stroke-width="6" stroke-dasharray="2 2.500" d="M483 312V378"/><path class="gs" d="M481 299h5v8h-5zM481 383h5v8h-5z"/>
<rect x="494" y="468" width="28.500" height="116" fill="none" stroke="#e6e6e6"/><path fill="none" stroke="#fdd835" stroke-width="5" stroke-dasharray="2 2.500" d="M497 490V570M520 480V570"/><path class="gs" d="M495 469h5v8h-5zM517 469h5v8h-5zM495 575h5v8h-5zM517 575h5v8h-5z"/>
<rect x="641.500" y="760" width="114.500" height="28" fill="none" stroke="#e6e6e6"/><path fill="none" stroke="#fdd835" stroke-width="5" stroke-dasharray="2 1.800" d="M651 763H740M651 785H740"/><path class="gs" d="M642 761h8v4h-8zM746 761h9v4h-9zM642 783h8v4h-8zM746 783h9v4h-9z"/>
<rect x="797.500" y="760" width="115" height="28" fill="none" stroke="#e6e6e6"/><path fill="none" stroke="#fdd835" stroke-width="5" stroke-dasharray="2 1.800" d="M812 763H897M812 785H897"/><path fill="#fdd835" d="M798 761h8v4h-8zM798 783h8v4h-8z"/><path class="gs" d="M903 761h9v4h-9zM903 783h9v4h-9z"/>
<!-- boxes -->
<rect x="475.500" y="656" width="34" height="33" fill="none" stroke="#e6e6e6"/><path class="gs" d="M484 657.500h17v6h-17zM484 682h17v6h-17zM477 670h6v6h-6z"/><path fill="#fdd835" d="M501 670h7v6h-7z"/>
<rect x="570" y="656" width="33.500" height="33" fill="none" stroke="#e6e6e6"/><path class="gs" d="M571 663h7v18h-7zM595 663h7v18h-7zM583 681h6v7h-6z"/><path fill="#fdd835" d="M583 657h6v7h-6z"/>
<rect x="531" y="647" width="18" height="20" fill="none" stroke="#e6e6e6"/><path class="gs" d="M532 653h4v8h-4zM544 653h4v8h-4z"/><path fill="#fdd835" d="M538 648h3v3h-3zM538 663h3v3h-3z"/>
<rect x="550" y="704" width="47.400" height="15" fill="none" stroke="#e6e6e6"/><path class="gs" d="M550 704h14v15h-14zM582 704h15v15h-15z"/>
<rect x="870.500" y="713" width="47" height="16" fill="none" stroke="#e6e6e6"/><path class="gs" d="M870.500 713h14v16h-14zM903 713h14v16h-14z"/>
<rect x="819.500" y="731" width="47" height="16" fill="none" stroke="#e6e6e6"/><path class="gs" d="M819.500 731h14v16h-14zM852 731h14v16h-14zM886 679h25v14h-25z"/>
<use href="#h" x="542" y="723"/><use href="#k" x="542" y="729"/><use href="#h" x="587" y="723"/><use href="#h" x="599" y="723"/><use href="#k" x="587" y="730"/>
<path fill="#fdd835" d="M547 736h14v13h-14zM595 736h13v13h-13zM821 238h13v13h-13zM841 238h14v13h-14zM691 288h13v13h-13z"/>
<g fill="#fdd835"><circle cx="893" cy="387" r="6.500"/><circle cx="910.300" cy="404" r="6.500"/><circle cx="891" cy="640" r="6.500"/><circle cx="913.600" cy="640" r="6.500"/><circle cx="775" cy="771" r="6.500"/><circle cx="775" cy="794" r="6.500"/><circle cx="605" cy="711" r="5"/></g>
<g fill="#7f7f7f"><circle cx="913.600" cy="663" r="6.500"/><circle cx="874.600" cy="738" r="5"/><circle cx="621.500" cy="796" r="6.500"/><circle cx="817" cy="196" r="6"/><circle cx="655" cy="295" r="6"/><circle cx="524" cy="402" r="6"/><circle cx="909" cy="343" r="6"/><circle cx="510.600" cy="622" r="6"/><circle cx="573.600" cy="793" r="6"/><circle cx="951.400" cy="793" r="6"/></g>
<circle cx="807.500" cy="674" r="6" fill="#0d7a84"/>
<g fill="#fff"><circle cx="817" cy="196" r="3"/><circle cx="655" cy="295" r="3"/><circle cx="524" cy="402" r="3"/><circle cx="909" cy="343" r="3"/><circle cx="510.600" cy="622" r="3"/><circle cx="573.600" cy="793" r="3"/><circle cx="951.400" cy="793" r="3"/><circle cx="807.500" cy="674" r="3"/></g>
</g>
<!-- shield 1 contents -->
<g>
<use href="#h" x="512" y="300"/><use href="#h" x="512" y="307"/><use href="#k" x="512" y="314"/><use href="#h" x="512" y="322"/><use href="#u" x="529" y="301"/><use href="#v" x="541" y="304"/><use href="#h" x="556" y="301"/><use href="#k" x="578" y="305"/><use href="#k" x="579" y="316"/><use href="#v" x="597" y="314"/><use href="#u" x="529" y="320"/><use href="#v" x="541" y="338"/><use href="#u" x="552" y="338"/><use href="#v" x="529" y="346"/><use href="#k" x="540" y="357"/><use href="#v" x="556" y="358"/><use href="#v" x="564" y="370"/><use href="#k" x="568" y="378"/><use href="#v" x="587" y="367"/><use href="#h" x="611" y="324"/><use href="#v" x="663" y="352"/><use href="#h" x="679" y="330"/><use href="#v" x="664" y="372"/><use href="#v" x="621" y="355"/><use href="#u" x="620" y="372"/><use href="#v" x="599" y="388"/><use href="#v" x="667" y="388"/>
<path fill="#fdd835" d="M552 312h22v13h-22zM678 340h16v9h-16zM678 358h16v9h-16zM677 371h17v8h-17zM677 388h17v10h-17zM600.500 349h16v10h-16zM600.500 371h16v8h-16zM608 333h6v13h-6zM654 336h6v13h-6zM609 389h6v13h-6zM656 390h7v13h-7z"/>
<path d="M565 312h3v13h-3z" fill="#026934"/>
<path fill="none" stroke="#e6e6e6" stroke-width=".8" d="M608 333h26v13h-26zM638 336h22v13h-22zM609 389h26v13h-26zM639 390h24v13h-24zM678 340h16v27h-16zM677 371h17v27h-17zM600.500 349h16v30h-16z"/>
<path class="gs" d="M627 333h7v13h-7zM638 336h7v13h-7zM628 389h7v13h-7zM639 390h7v13h-7z"/>
<rect x="564" y="329" width="29" height="33" fill="#026934" stroke="#e6e6e6" stroke-width=".8"/><rect x="564" y="329" width="29" height="33" fill="url(#bc)"/>
<rect x="634" y="357" width="22" height="25" fill="#026934" stroke="#e6e6e6" stroke-width=".8"/><rect x="634" y="357" width="22" height="25" fill="url(#bc)"/>
</g>
<!-- watermarks -->
<g class="wm"><text transform="translate(670,306) rotate(-45)">XZZ@XZZHK</text><text transform="translate(1118,307) rotate(-45)">XZZ@XZZHK</text><text transform="translate(1118,706) rotate(-45)">XZZ@XZZHK</text><text transform="translate(668,702) rotate(-45)">XZZ@XZZHK</text></g>
</svg>

<!-- handles -->
<svg class="a" style="left:430px;top:400px" width="12" height="130"><path d="M2 10L10 22V108L2 120Z" fill="#cfe4fb"/><path d="M7 60l-3 3 3 3" fill="none" stroke="#7aa9e6"/></svg>
<div class="a" style="left:1513px;top:132px;width:2px;height:706px;background:#e3e3e3"></div>
<svg class="a" style="left:1513px;top:425px" width="10" height="120"><path d="M10 5L2 20V95L10 110Z" fill="#cfe4fb"/><path d="M8 60l-3 3 3 3" fill="none" stroke="#7aa9e6"/></svg>

<!-- layers -->
<div class="a" id="lp">
<div class="lb" style="top:3px;background:#004a00">1</div><div class="lb" style="top:33px">2</div><div class="lb" style="top:63px">3</div><div class="lb" style="top:93px">4</div><div class="lb" style="top:123px">5</div><div class="lb" style="top:153px">6</div><div class="lb" style="top:183px">7</div><div class="lb" style="top:213px;background:#007a3d">8</div><div class="lb" style="top:243px;font-size:14px">ALL</div>
</div>

<!-- title -->
<div class="a" id="title">
<svg class="a" style="left:10px;top:4px" width="32" height="32" viewBox="0 0 32 32"><path d="M15 1l1.800 11-1.800 3-1.800-3zM15 31l-1.800-11 1.800-3 1.800 3zM2 16l9-1.600 2 1.600-2 1.600zM28 16l-9-1.600-2 1.600 2 1.600z" fill="#fff"/><circle cx="11" cy="16" r="1.300" fill="#fff"/><circle cx="19" cy="16" r="1.300" fill="#fff"/><circle cx="15" cy="12" r="1.300" fill="#fff"/><circle cx="15" cy="20" r="1.300" fill="#fff"/></svg>
<div class="a" id="ttext">XZZ Schematics V4.77 [ VIP Due date: 2025-10-30 17:50:47 ]</div>
<svg class="a" style="left:1385px;top:6px" width="130" height="28" viewBox="1385 6 130 28"><path d="M1391 16.500h14a1.500 1.500 0 0 1 1.500 1.500v7.500a1.500 1.500 0 0 1-1.500 1.500h-14a1.500 1.500 0 0 1-1.500-1.500V18a1.500 1.500 0 0 1 1.500-1.500zM1394 16.500v-3a1 1 0 0 1 1-1h6a1 1 0 0 1 1 1v3M1393 20.500h10" fill="none" stroke="#dbe63c" stroke-width="1.400"/><path d="M1417.500 10v20" stroke="#8cc6ff"/><path d="M1430 20h16" stroke="#fff" stroke-width="2"/><rect x="1461" y="13" width="14.500" height="14.500" rx="3" fill="none" stroke="#fff" stroke-width="1.600"/><path d="M1491 13l14 14M1505 13l-14 14" stroke="#fff" stroke-width="1.700"/></svg>
</div>

<!-- menu -->
<div class="a" id="menu"><span style="left:18px">File(F)</span><span style="left:74px">VIP(V)</span><span style="left:131px">Tool(T)</span><span style="left:195px">Settings(S)</span><span style="left:283px">PCB View settings(S)</span></div>

<!-- left head -->
<div class="a" id="lefthead">
<div class="a" id="shrink">Shrink</div>
<div class="a" id="inp">Please input the model number or PCB</div>
<svg class="a" style="left:342px;top:14px" width="14" height="10"><path d="M1 2l6 6 6-6" fill="none" stroke="#a8a8a8" stroke-width="1.300"/></svg>
<div class="a" id="sb"><svg class="a" style="left:14px;top:4px" width="22" height="22"><circle cx="11" cy="11" r="7.500" fill="none" stroke="#fff" stroke-width="2"/><path d="M16.500 16.500l2.500 2.500" stroke="#fff" stroke-width="2"/></svg></div>
</div>

<!-- sidebar -->
<div class="a" id="side">
<svg class="a" style="left:0;top:0" width="74" height="726" viewBox="0 112 74 726">
<rect x="10" y="122" width="54" height="224" rx="6" fill="none" stroke="#3a9cf8" stroke-width="1.700" stroke-dasharray="5 3"/>
<rect x="10" y="384" width="54" height="222" rx="6" fill="none" stroke="#676d85" stroke-width="1.700" stroke-dasharray="5 3"/>
<rect x="25" y="116" width="26" height="14" fill="#fff"/><rect x="12" y="376" width="50" height="14" fill="#fff"/>
<circle cx="37" cy="158" r="14" fill="#a3a9bc"/><path d="M33 151.500L44.500 158L33 164.500Z" fill="#fff" stroke="#fff" stroke-width="1.500" stroke-linejoin="round"/>
<rect x="28" y="214" width="18" height="30" rx="3.500" fill="url(#ph)"/>
<path d="M26 290.500h22a1 1 0 0 1 1 1v14h-24v-14a1 1 0 0 1 1-1z" fill="none" stroke="#a3a9bc" stroke-width="2"/><rect x="22.500" y="306" width="30" height="3.500" rx="1.500" fill="#a3a9bc"/>
<path d="M28 410L46 428M46 410L28 428" stroke="#a3a9bc" stroke-width="3.500"/><g fill="none" stroke="#a3a9bc" stroke-width="3"><circle cx="28" cy="410" r="4.500"/><circle cx="46" cy="410" r="4.500"/><circle cx="28" cy="428" r="4.500"/><circle cx="46" cy="428" r="4.500"/></g><circle cx="37" cy="419" r="4" fill="#a3a9bc"/><circle cx="37" cy="419" r="1.500" fill="#fff"/>
<rect x="23" y="484" width="28" height="14" rx="7" fill="#a3a9bc"/><path d="M27 491h6M30 488v6" stroke="#fff" stroke-width="1.500"/><circle cx="41" cy="489.500" r="1" fill="#fff"/><circle cx="44" cy="492.500" r="1" fill="#fff"/>
<path d="M30 548.500h14q3 0 4 3l2 6q1.500 1 1.500 3v8q0 2-2 2h-2q-2 0-2-2v-1h-17v1q0 2-2 2h-2q-2 0-2-2v-8q0-2 1.500-3l2-6q1-3 4-3z" fill="#a3a9bc"/><path d="M29 552h16l1.500 5h-19z" fill="#fff"/><circle cx="28" cy="562" r="2" fill="#fff"/><circle cx="46" cy="562" r="2" fill="#fff"/><path d="M33 562h8" stroke="#fff" stroke-width="1.500"/>
<path d="M37 632l4 8.500 9 1.200-6.500 6.300 1.500 9-8-4.300-8 4.300 1.500-9-6.500-6.300 9-1.200z" fill="#a3a9bc" stroke="#a3a9bc" stroke-width="2" stroke-linejoin="round"/>
</svg>
<div class="sl" style="top:1px;color:#3a9cf8">VIP</div>
<div class="sl" style="top:65px">Cour...</div>
<div class="sl" style="top:135px;color:#3a9cf8">Phone</div>
<div class="sl" style="top:205px">Com...</div>
<div class="sl" style="top:262px">Custom</div>
<div class="sl" style="top:325px">Drone</div>
<div class="sl" style="top:395px">Gam...</div>
<div class="sl" style="top:465px">Car</div>
<div class="sl" style="top:550px">Favorites</div>
</div>

<!-- tree -->
<div class="a" id="panel">
<div class="a" id="tree"><div id="rows">
<div class="r d3"><svg><use href="#pdf"/></svg><b>FindX3Pro-3CC206-SUB image.pdf</b></div>
<div class="r d3"><svg><use href="#pcb"/></svg><b>FindX3Pro-3CC206-SUB PCB layer.pcb</b></div>
<div class="r d3"><svg><use href="#pcb"/></svg><b>FindX3Pro-3CC206-SUB YiDianTong.pcb</b></div>
<div class="r d1"><svg><use href="#fld"/></svg><b>FindX3</b></div>
<div class="r d2"><svg><use href="#pdf"/></svg><b>FIND X3 2CC208-2 location.pdf</b></div>
<div class="r d2"><svg><use href="#pdf"/></svg><b>FIND X3 2CC208-2 schematic.pdf</b></div>
<div class="r d2"><svg><use href="#pcb"/></svg><b>FIND X3- MB+SUB YiDianTong.pcb</b></div>
<div class="r d2"><svg><use href="#pdf"/></svg><b>FIND X3-2CC208- MB Component</b></div>
<div class="r d2"><svg><use href="#pcb"/></svg><b>FIND X3-2CC208- MB PCB layer.pcb</b></div>
<div class="r d2"><svg><use href="#pcb"/></svg><b>FIND X3-2CC208- MB YiDianTong.pcb</b></div>
<div class="r d2"><svg><use href="#pdf"/></svg><b>FIND X3-2CC208- MB image.pdf</b></div>
<div class="r d2"><svg><use href="#pdf"/></svg><b>FIND X3-3CC208- SUB Component</b></div>
<div class="r d2"><svg><use href="#pcb"/></svg><b>FIND X3-3CC208- SUB PCB layer.pcb</b></div>
<div class="r d2"><svg><use href="#pcb"/></svg><b>FIND X3-3CC208- SUB YiDianTong.pcb</b></div>
<div class="r d2"><svg><use href="#pdf"/></svg><b>FIND X3-3CC208- SUB image.pdf</b></div>
<div class="r d1"><svg><use href="#fld"/></svg><b>FindX2 Pro</b></div>
<div class="r d2"><svg><use href="#pcb"/></svg><b>FindX2 Pro-2CC169-0 MB PCB layer.pcb</b></div>
<div class="r d2"><svg><use href="#pcb"/></svg><b>FindX2 Pro-2CC169-0 MB+SUB YiDianTong.pcb</b></div>
<div class="r d2"><svg><use href="#pcb"/></svg><b style="color:#4f93fb">FindX2 Pro-2CC169-0 SUB PCB layer.pcb</b></div>
<div class="r d2"><svg><use href="#pdf"/></svg><b>FindX2 Pro-2CC169-0 image.pdf</b></div>
<div class="r fo"><svg><use href="#fld"/></svg><b>Repair Case</b></div>
<div class="r d3"><svg><use href="#pdf"/></svg><b>OPPO FindX2Pro does not display</b></div>
<div class="r d3"><svg><use href="#pdf"/></svg><b>Troubleshooting of FindX2pro no</b></div>
<div class="r d1"><svg><use href="#fld"/></svg><b>FindX2</b></div>
<div class="r fo"><svg><use href="#fld"/></svg><b>Diode value</b></div>
<div class="r d3"><svg><use href="#pcb"/></svg><b>Findx2-2CC160.pcb</b></div>
<div class="r fo"><svg><use href="#fld"/></svg><b>Schematic and boardview</b></div>
<div class="r d3"><svg><use href="#pdf"/></svg><b>Find X2 Small board-31CC160 hardware</b></div>
<div class="r d3"><svg><use href="#pcb"/></svg><b>Find X2-2CC160 MB PCB layer.pcb</b></div>
<div class="r d3"><svg><use href="#pcb"/></svg><b>Find X2-2CC160 MB YiDianTong.pcb</b></div>
<div class="r d3"><svg><use href="#pcb"/></svg><b>Find X2-2CC160 MB+SUB  YiDianTong.pcb</b></div>
</div></div>
<div class="a" id="sc1"></div>
<svg class="a" style="left:345px;top:3px" width="12" height="10"><path d="M1 7l5-5 5 5" fill="none" stroke="#555" stroke-width="1.100"/></svg>
<div class="a" id="sc2"></div>
</div>
<div class="a" style="left:430px;top:112px;width:2px;height:726px;background:#e6e6e6"></div>

<!-- tabs -->
<div class="a" id="tabs">
<div class="a" id="mc">Member Center</div>
<svg class="a" style="left:22px;top:8px" width="20" height="18" viewBox="0 0 20 18"><path d="M1 9L10 1.500L19 9M4 7.500V17H8V11.500H12V17H16V7.500" fill="none" stroke="#222" stroke-width="1.500" stroke-linejoin="round"/></svg>
<div class="a" id="tab">FindX2 Pro-2CC169-0 SUB PCB layer.pcb</div>
<svg class="a" style="left:1061px;top:8px" width="20" height="19" viewBox="0 0 20 19"><path d="M1.500 13V3a1.500 1.500 0 0 1 1.500-1.500h10" fill="none" stroke="#888" stroke-width="1.600"/><rect x="4.500" y="5" width="14" height="13" rx="2" fill="#7c7c7c"/><path d="M9 9l5 5M14 9l-5 5" stroke="#fff" stroke-width="1.400"/></svg>
</div>

<!-- toolbar -->
<div class="a" id="tool"></div>
<svg class="a" style="left:441px;top:106px" width="1072" height="26" viewBox="441 106 1072 26">
<rect x="679" y="107" width="24" height="24" fill="#b5d4fb"/><rect x="731" y="107" width="24" height="24" fill="#b5d4fb"/><rect x="757" y="107" width="24" height="24" fill="#b5d4fb"/>
<g stroke="#cfcfcf"><path d="M473.500 110v18M530.500 110v18M562.500 110v18M618.500 110v18M649.500 110v18M811.500 110v18M842.500 110v18M1103.500 110v18"/></g>
<path class="t" style="stroke-width:1.200" d="M449.500 111.500h8v15.500h-8zM459 111.500h8v15.500h-8z"/>
<g class="t" style="stroke-width:1.700"><circle cx="489" cy="119" r="6.500"/><path d="M494 124l4 4M486 119h6M489 116v6"/><circle cx="515" cy="119" r="6.500"/><path d="M520 124l4 4M512 119h6"/></g>
<g class="t" style="stroke-width:1.300;stroke:#555"><rect x="541" y="114.500" width="10" height="9" rx="3"/><path d="M539 116v-3a1.500 1.500 0 0 1 1.500-1.500h3M549 111.500h3.500a1.500 1.500 0 0 1 1.500 1.500v3M554 122v3a1.500 1.500 0 0 1-1.500 1.500h-3M543.500 126.500h-3a1.500 1.500 0 0 1-1.500-1.500v-3"/></g>
<g class="t" style="stroke-width:1.500"><rect x="568.500" y="115.500" width="17" height="12.500" rx="1.500"/><path d="M570 114Q576 109.500 585 113M576 107.500l-2.500 2 2.500 2.500"/><rect x="595" y="115.500" width="17" height="12.500" rx="1.500"/><path d="M611 114Q604 109.500 596 113M604 107.500l2.500 2-2.500 2.500"/></g>
<g class="t" style="stroke-width:1.500"><rect x="627" y="111" width="13" height="5.500" rx="1"/><path d="M640 113.500h1.500v4.500h-7v3"/><rect x="632.500" y="121" width="3" height="7" rx="1" fill="#333"/></g>
<g class="t" style="stroke-width:1.300"><path d="M656.500 113l6 3.500v7l-6 3.500zM673.500 113l-6 3.500v7l6 3.500z"/><path d="M665 111v18"/></g>
<g fill="none" stroke="#e8141c" stroke-width="1.300" stroke-linecap="round"><path d="M684 119a7.500 7.500 0 0 1 15 0zM682 119h19M685 122l7 3 7-3M691.500 110v2M685 126l-1 2M691.500 127v2M698 126l1 2"/></g>
<text x="707" y="125.500" font-family="Liberation Sans,sans-serif" font-size="15.500" fill="#111">3D</text>
<path d="M732 119h6M749 119h5M738 112.500l11 6.500-11 6.500zM749.500 112.500v13" fill="#4f93fb" stroke="#4f93fb" stroke-width="1.200"/>
<rect x="759" y="109.500" width="20" height="20" rx="2" fill="none" stroke="#333" stroke-width=".9"/>
<path d="M763 112.500l9 10 5 5" fill="none" stroke="#1fb11f" stroke-width="1"/><path d="M761 119l5 0 4 8h5" fill="none" stroke="#e81010" stroke-width="1"/><path d="M767 112h5l4 4" fill="none" stroke="#4f93fb" stroke-width="1"/><circle cx="763" cy="119" r="1.500" fill="none" stroke="#e81010"/><circle cx="771" cy="113" r="1.500" fill="none" stroke="#4f93fb"/>
<g class="t" style="stroke-width:1.300"><path d="M790 125Q791 113 802 112.500"/><circle cx="789" cy="125.500" r="2"/><circle cx="803" cy="112" r="2"/></g>
<g class="t" style="stroke-width:1.500"><rect x="821" y="111.500" width="12" height="16.500" rx="6"/><path d="M821 117.500h12M827 111.500v6M824.500 113h5"/></g>
<g class="t" style="stroke-width:1.700"><circle cx="1089" cy="118.500" r="6.500"/><path d="M1094 123.500l3.500 3.500"/></g>
<g fill="none" stroke="#4f93e8" stroke-width="1.400"><path d="M1230 119.500Q1238 110 1246 119.500Q1238 127 1230 119.500z"/><circle cx="1238" cy="119" r="3.500"/></g>
<g fill="none" stroke="#7a7a7a" stroke-width="1.600"><rect x="1486.500" y="111.500" width="19" height="15.500"/><path d="M1493 111.500v15.500"/><path d="M1496 115h7M1496 119h7M1496 123h7" stroke-width="1.300"/></g>
</svg>
<div class="a" id="ti">Enter the component or net name</div>
<svg class="a" style="left:1055px;top:113px" width="15" height="10"><path d="M1 2l6 6 6-6" fill="none" stroke="#999" stroke-width="1.200"/></svg>
<div class="a" id="cs">[ColorScheme]</div>

<div class="a" id="foot">XZZ Schematics https://www.xzztools.com</div>
</body></html>
